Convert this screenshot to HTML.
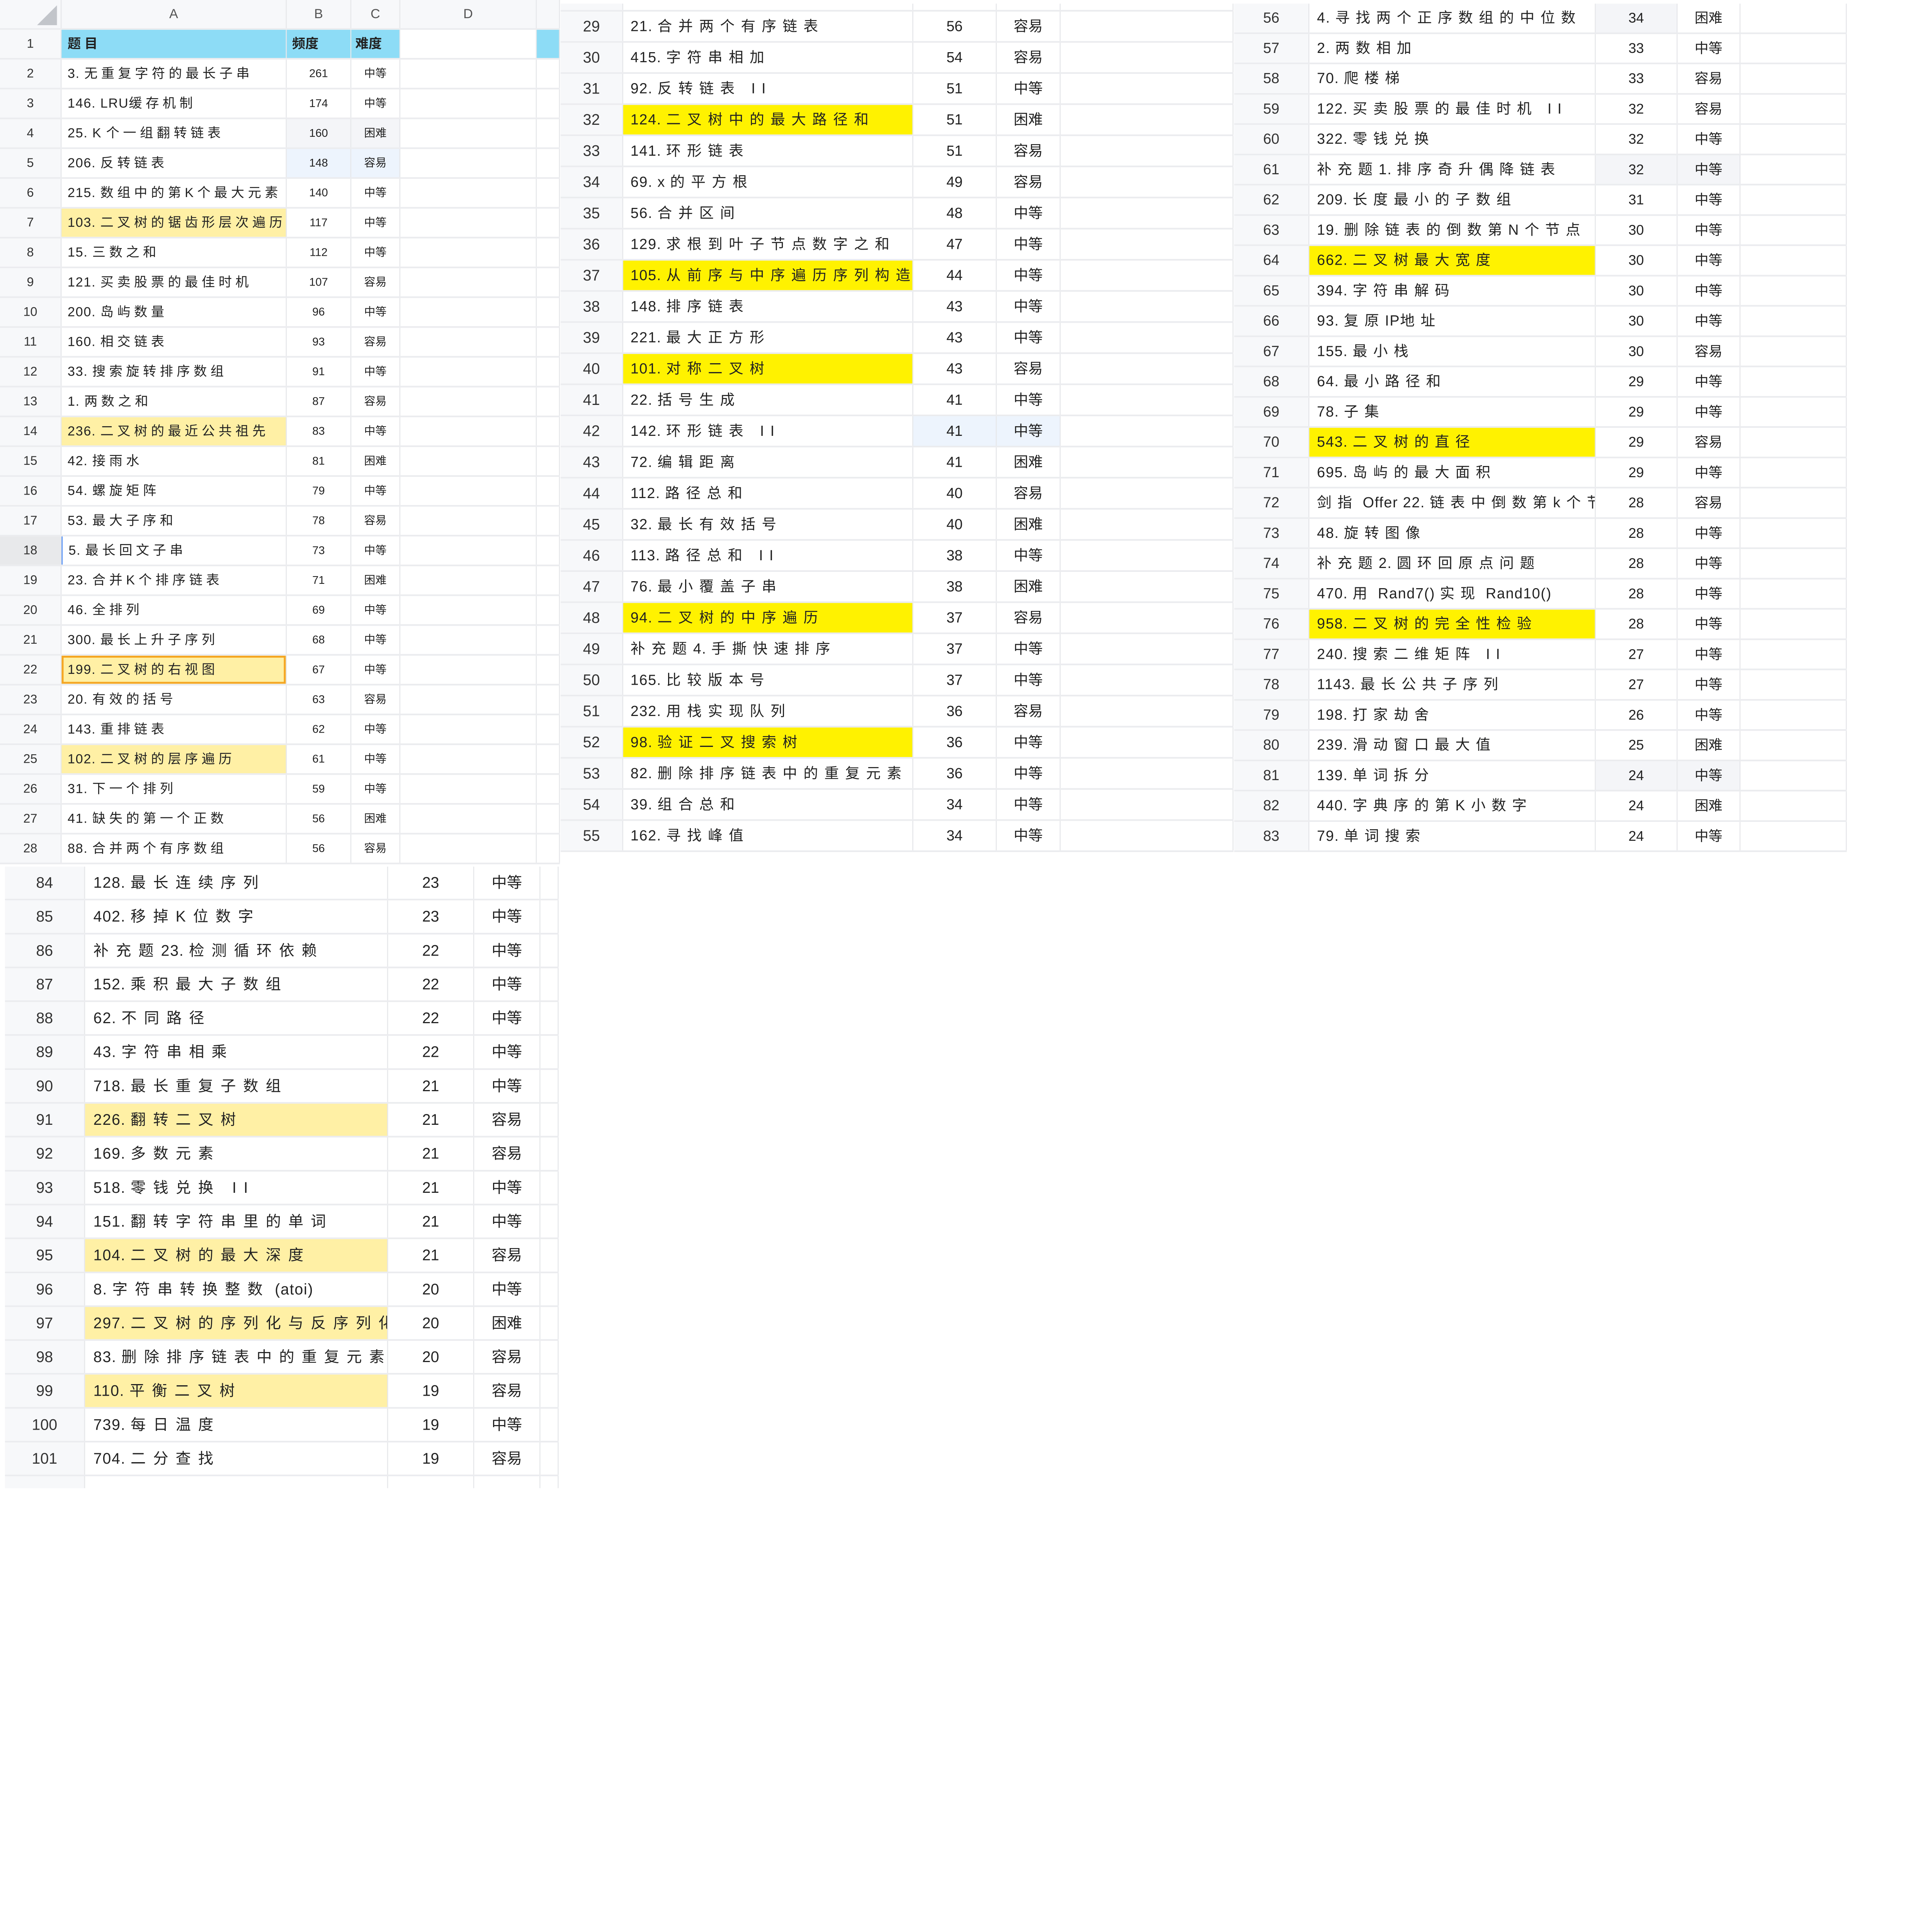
<!DOCTYPE html>
<html><head><meta charset="utf-8">
<style>
html,body{margin:0;padding:0;background:#fff;overflow:hidden;}
body{width:4850px;height:5004px;position:relative;font-family:"Liberation Sans","Noto Sans CJK SC",sans-serif;color:#222;}
#wrap{position:absolute;left:0;top:0;width:5660px;height:5840px;transform:scale(0.857);transform-origin:0 0;overflow:hidden;}
.t{position:absolute;}
.r{display:flex;box-sizing:border-box;border-bottom:5px solid #ebecef;}
.r>span{display:block;flex:none;box-sizing:border-box;overflow:hidden;white-space:nowrap;border-right:3px solid #e6e7ea;height:100%;}
.n{background:#f7f8fa;text-align:center;color:#333;}
.b,.c{text-align:center;}
.a i{font-style:normal;letter-spacing:2px;}
.y{background:#fff200;}
.p{background:#fff0a5;}
.lg{background:#f4f5f8;}
.lb{background:#edf4fd;}
.sel{box-shadow:inset 0 0 0 6px #f5a623;}
#t1 .r{height:90px;line-height:85px;font-size:40px;}
#t1 .r>span:nth-child(1){width:186px;font-size:38px;}
#t1 .r>span:nth-child(2){width:680px;padding-left:18px;letter-spacing:11px;}
#t1 .r>span:nth-child(3){width:195px;font-size:34px;}
#t1 .r>span:nth-child(4){width:148px;font-size:34px;}
#t1 .r>span:nth-child(5){width:412px;}
#t1 .r>span:nth-child(6){width:70px;}
#t1 .h>span{background:#f7f8fa;color:#555;text-align:center;padding-left:0 !important;letter-spacing:0 !important;font-size:40px !important;}
#t1 .r1>span{background:#8ddcf6;font-weight:bold;}
#t1 .r1>span.n{background:#f7f8fa;font-weight:normal;}
#t1 .r1>span.d{background:#fff;}
#t2 .r{height:94px;line-height:89px;font-size:44px;}
#t2 .r.top{height:24px;}
#t2 .r>span:nth-child(1){width:189px;font-size:46px;}
#t2 .r>span:nth-child(2){width:876px;padding-left:22px;letter-spacing:19px;}
#t2 .r>span:nth-child(3){width:252px;}
#t2 .r>span:nth-child(4){width:193px;}
#t2 .r>span:nth-child(5){width:522px;}
#t3 .r{height:91.5px;line-height:86px;font-size:42px;}
#t3 .r>span:nth-child(1){width:227px;font-size:44px;}
#t3 .r>span:nth-child(2){width:865px;padding-left:23px;letter-spacing:18px;font-size:44px;}
#t3 .r>span:nth-child(3){width:247px;}
#t3 .r>span:nth-child(4){width:190px;}
#t3 .r>span:nth-child(5){width:321px;}
#t4 .r{height:102.3px;line-height:97px;font-size:46px;}
#t4 .r.last{height:36px;border-bottom:none;}
#t4 .r>span:nth-child(1){width:242px;}
#t4 .r>span:nth-child(2){width:915px;padding-left:25px;letter-spacing:22px;}
#t4 .r>span:nth-child(3){width:260px;}
#t4 .r>span:nth-child(4){width:200px;}
#t4 .r>span:nth-child(5){width:55px;}
</style></head><body><div id="wrap">

<div class="t" id="t1" style="left:0;top:0;">
<div class="r h"><span class="n" style="position:relative"><svg width="186" height="85" style="position:absolute;left:0;top:0"><polygon points="172,16 172,76 112,76" fill="#c2c5ca"/></svg></span><span>A</span><span>B</span><span>C</span><span>D</span><span></span></div>
<div class="r r1"><span class="n">1</span><span class="a">题目</span><span class="b" style="text-align:left;padding-left:16px;font-size:40px">频度</span><span class="c" style="text-align:left;padding-left:12px;font-size:40px">难度</span><span class="d"></span><span></span></div>
<div class="r"><span class="n">2</span><span class="a"><i>3. </i>无重复字符的最长子串</span><span class="b">261</span><span class="c">中等</span><span></span><span></span></div>
<div class="r"><span class="n">3</span><span class="a"><i>146. LRU</i>缓存机制</span><span class="b">174</span><span class="c">中等</span><span></span><span></span></div>
<div class="r"><span class="n">4</span><span class="a"><i>25. K </i>个一组翻转链表</span><span class="b lg">160</span><span class="c lg">困难</span><span></span><span></span></div>
<div class="r"><span class="n">5</span><span class="a"><i>206. </i>反转链表</span><span class="b lb">148</span><span class="c lb">容易</span><span></span><span></span></div>
<div class="r"><span class="n">6</span><span class="a"><i>215. </i>数组中的第K个最大元素</span><span class="b">140</span><span class="c">中等</span><span></span><span></span></div>
<div class="r"><span class="n">7</span><span class="a p"><i>103. </i>二叉树的锯齿形层次遍历</span><span class="b">117</span><span class="c">中等</span><span></span><span></span></div>
<div class="r"><span class="n">8</span><span class="a"><i>15. </i>三数之和</span><span class="b">112</span><span class="c">中等</span><span></span><span></span></div>
<div class="r"><span class="n">9</span><span class="a"><i>121. </i>买卖股票的最佳时机</span><span class="b">107</span><span class="c">容易</span><span></span><span></span></div>
<div class="r"><span class="n">10</span><span class="a"><i>200. </i>岛屿数量</span><span class="b">96</span><span class="c">中等</span><span></span><span></span></div>
<div class="r"><span class="n">11</span><span class="a"><i>160. </i>相交链表</span><span class="b">93</span><span class="c">容易</span><span></span><span></span></div>
<div class="r"><span class="n">12</span><span class="a"><i>33. </i>搜索旋转排序数组</span><span class="b">91</span><span class="c">中等</span><span></span><span></span></div>
<div class="r"><span class="n">13</span><span class="a"><i>1. </i>两数之和</span><span class="b">87</span><span class="c">容易</span><span></span><span></span></div>
<div class="r"><span class="n">14</span><span class="a p"><i>236. </i>二叉树的最近公共祖先</span><span class="b">83</span><span class="c">中等</span><span></span><span></span></div>
<div class="r"><span class="n">15</span><span class="a"><i>42. </i>接雨水</span><span class="b">81</span><span class="c">困难</span><span></span><span></span></div>
<div class="r"><span class="n">16</span><span class="a"><i>54. </i>螺旋矩阵</span><span class="b">79</span><span class="c">中等</span><span></span><span></span></div>
<div class="r"><span class="n">17</span><span class="a"><i>53. </i>最大子序和</span><span class="b">78</span><span class="c">容易</span><span></span><span></span></div>
<div class="r"><span class="n" style="background:#e8e9eb">18</span><span class="a" style="border-left:3px solid #4a8af4"><i>5. </i>最长回文子串</span><span class="b">73</span><span class="c">中等</span><span></span><span></span></div>
<div class="r"><span class="n">19</span><span class="a"><i>23. </i>合并K个排序链表</span><span class="b">71</span><span class="c">困难</span><span></span><span></span></div>
<div class="r"><span class="n">20</span><span class="a"><i>46. </i>全排列</span><span class="b">69</span><span class="c">中等</span><span></span><span></span></div>
<div class="r"><span class="n">21</span><span class="a"><i>300. </i>最长上升子序列</span><span class="b">68</span><span class="c">中等</span><span></span><span></span></div>
<div class="r"><span class="n">22</span><span class="a p sel"><i>199. </i>二叉树的右视图</span><span class="b">67</span><span class="c">中等</span><span></span><span></span></div>
<div class="r"><span class="n">23</span><span class="a"><i>20. </i>有效的括号</span><span class="b">63</span><span class="c">容易</span><span></span><span></span></div>
<div class="r"><span class="n">24</span><span class="a"><i>143. </i>重排链表</span><span class="b">62</span><span class="c">中等</span><span></span><span></span></div>
<div class="r"><span class="n">25</span><span class="a p"><i>102. </i>二叉树的层序遍历</span><span class="b">61</span><span class="c">中等</span><span></span><span></span></div>
<div class="r"><span class="n">26</span><span class="a"><i>31. </i>下一个排列</span><span class="b">59</span><span class="c">中等</span><span></span><span></span></div>
<div class="r"><span class="n">27</span><span class="a"><i>41. </i>缺失的第一个正数</span><span class="b">56</span><span class="c">困难</span><span></span><span></span></div>
<div class="r"><span class="n">28</span><span class="a"><i>88. </i>合并两个有序数组</span><span class="b">56</span><span class="c">容易</span><span></span><span></span></div>
</div>

<div class="t" id="t2" style="left:1693px;top:11px;">
<div class="r top"><span class="n"></span><span class="a"></span><span></span><span></span><span></span></div>
<div class="r"><span class="n">29</span><span class="a"><i>21. </i>合并两个有序链表</span><span class="b">56</span><span class="c">容易</span><span></span></div>
<div class="r"><span class="n">30</span><span class="a"><i>415. </i>字符串相加</span><span class="b">54</span><span class="c">容易</span><span></span></div>
<div class="r"><span class="n">31</span><span class="a"><i>92. </i>反转链表 II</span><span class="b">51</span><span class="c">中等</span><span></span></div>
<div class="r"><span class="n">32</span><span class="a y"><i>124. </i>二叉树中的最大路径和</span><span class="b">51</span><span class="c">困难</span><span></span></div>
<div class="r"><span class="n">33</span><span class="a"><i>141. </i>环形链表</span><span class="b">51</span><span class="c">容易</span><span></span></div>
<div class="r"><span class="n">34</span><span class="a"><i>69. x </i>的平方根</span><span class="b">49</span><span class="c">容易</span><span></span></div>
<div class="r"><span class="n">35</span><span class="a"><i>56. </i>合并区间</span><span class="b">48</span><span class="c">中等</span><span></span></div>
<div class="r"><span class="n">36</span><span class="a"><i>129. </i>求根到叶子节点数字之和</span><span class="b">47</span><span class="c">中等</span><span></span></div>
<div class="r"><span class="n">37</span><span class="a y"><i>105. </i>从前序与中序遍历序列构造二叉树</span><span class="b">44</span><span class="c">中等</span><span></span></div>
<div class="r"><span class="n">38</span><span class="a"><i>148. </i>排序链表</span><span class="b">43</span><span class="c">中等</span><span></span></div>
<div class="r"><span class="n">39</span><span class="a"><i>221. </i>最大正方形</span><span class="b">43</span><span class="c">中等</span><span></span></div>
<div class="r"><span class="n">40</span><span class="a y"><i>101. </i>对称二叉树</span><span class="b">43</span><span class="c">容易</span><span></span></div>
<div class="r"><span class="n">41</span><span class="a"><i>22. </i>括号生成</span><span class="b">41</span><span class="c">中等</span><span></span></div>
<div class="r"><span class="n">42</span><span class="a"><i>142. </i>环形链表 II</span><span class="b lb">41</span><span class="c lb">中等</span><span></span></div>
<div class="r"><span class="n">43</span><span class="a"><i>72. </i>编辑距离</span><span class="b">41</span><span class="c">困难</span><span></span></div>
<div class="r"><span class="n">44</span><span class="a"><i>112. </i>路径总和</span><span class="b">40</span><span class="c">容易</span><span></span></div>
<div class="r"><span class="n">45</span><span class="a"><i>32. </i>最长有效括号</span><span class="b">40</span><span class="c">困难</span><span></span></div>
<div class="r"><span class="n">46</span><span class="a"><i>113. </i>路径总和 II</span><span class="b">38</span><span class="c">中等</span><span></span></div>
<div class="r"><span class="n">47</span><span class="a"><i>76. </i>最小覆盖子串</span><span class="b">38</span><span class="c">困难</span><span></span></div>
<div class="r"><span class="n">48</span><span class="a y"><i>94. </i>二叉树的中序遍历</span><span class="b">37</span><span class="c">容易</span><span></span></div>
<div class="r"><span class="n">49</span><span class="a">补充题<i>4. </i>手撕快速排序</span><span class="b">37</span><span class="c">中等</span><span></span></div>
<div class="r"><span class="n">50</span><span class="a"><i>165. </i>比较版本号</span><span class="b">37</span><span class="c">中等</span><span></span></div>
<div class="r"><span class="n">51</span><span class="a"><i>232. </i>用栈实现队列</span><span class="b">36</span><span class="c">容易</span><span></span></div>
<div class="r"><span class="n">52</span><span class="a y"><i>98. </i>验证二叉搜索树</span><span class="b">36</span><span class="c">中等</span><span></span></div>
<div class="r"><span class="n">53</span><span class="a"><i>82. </i>删除排序链表中的重复元素 II</span><span class="b">36</span><span class="c">中等</span><span></span></div>
<div class="r"><span class="n">54</span><span class="a"><i>39. </i>组合总和</span><span class="b">34</span><span class="c">中等</span><span></span></div>
<div class="r"><span class="n">55</span><span class="a"><i>162. </i>寻找峰值</span><span class="b">34</span><span class="c">中等</span><span></span></div>
</div>

<div class="t" id="t3" style="left:3727px;top:11px;">
<div class="r"><span class="n">56</span><span class="a"><i>4. </i>寻找两个正序数组的中位数</span><span class="b lg">34</span><span class="c">困难</span><span></span></div>
<div class="r"><span class="n">57</span><span class="a"><i>2. </i>两数相加</span><span class="b">33</span><span class="c">中等</span><span></span></div>
<div class="r"><span class="n">58</span><span class="a"><i>70. </i>爬楼梯</span><span class="b">33</span><span class="c">容易</span><span></span></div>
<div class="r"><span class="n">59</span><span class="a"><i>122. </i>买卖股票的最佳时机 II</span><span class="b">32</span><span class="c">容易</span><span></span></div>
<div class="r"><span class="n">60</span><span class="a"><i>322. </i>零钱兑换</span><span class="b">32</span><span class="c">中等</span><span></span></div>
<div class="r"><span class="n">61</span><span class="a">补充题<i>1. </i>排序奇升偶降链表</span><span class="b lg">32</span><span class="c lg">中等</span><span></span></div>
<div class="r"><span class="n">62</span><span class="a"><i>209. </i>长度最小的子数组</span><span class="b">31</span><span class="c">中等</span><span></span></div>
<div class="r"><span class="n">63</span><span class="a"><i>19. </i>删除链表的倒数第N个节点</span><span class="b">30</span><span class="c">中等</span><span></span></div>
<div class="r"><span class="n">64</span><span class="a y"><i>662. </i>二叉树最大宽度</span><span class="b">30</span><span class="c">中等</span><span></span></div>
<div class="r"><span class="n">65</span><span class="a"><i>394. </i>字符串解码</span><span class="b">30</span><span class="c">中等</span><span></span></div>
<div class="r"><span class="n">66</span><span class="a"><i>93. </i>复原<i>IP</i>地址</span><span class="b">30</span><span class="c">中等</span><span></span></div>
<div class="r"><span class="n">67</span><span class="a"><i>155. </i>最小栈</span><span class="b">30</span><span class="c">容易</span><span></span></div>
<div class="r"><span class="n">68</span><span class="a"><i>64. </i>最小路径和</span><span class="b">29</span><span class="c">中等</span><span></span></div>
<div class="r"><span class="n">69</span><span class="a"><i>78. </i>子集</span><span class="b">29</span><span class="c">中等</span><span></span></div>
<div class="r"><span class="n">70</span><span class="a y"><i>543. </i>二叉树的直径</span><span class="b">29</span><span class="c">容易</span><span></span></div>
<div class="r"><span class="n">71</span><span class="a"><i>695. </i>岛屿的最大面积</span><span class="b">29</span><span class="c">中等</span><span></span></div>
<div class="r"><span class="n">72</span><span class="a">剑指<i> Offer 22. </i>链表中倒数第k个节点</span><span class="b">28</span><span class="c">容易</span><span></span></div>
<div class="r"><span class="n">73</span><span class="a"><i>48. </i>旋转图像</span><span class="b">28</span><span class="c">中等</span><span></span></div>
<div class="r"><span class="n">74</span><span class="a">补充题<i>2. </i>圆环回原点问题</span><span class="b">28</span><span class="c">中等</span><span></span></div>
<div class="r"><span class="n">75</span><span class="a"><i>470. </i>用<i> Rand7() </i>实现<i> Rand10()</i></span><span class="b">28</span><span class="c">中等</span><span></span></div>
<div class="r"><span class="n">76</span><span class="a y"><i>958. </i>二叉树的完全性检验</span><span class="b">28</span><span class="c">中等</span><span></span></div>
<div class="r"><span class="n">77</span><span class="a"><i>240. </i>搜索二维矩阵 II</span><span class="b">27</span><span class="c">中等</span><span></span></div>
<div class="r"><span class="n">78</span><span class="a"><i>1143. </i>最长公共子序列</span><span class="b">27</span><span class="c">中等</span><span></span></div>
<div class="r"><span class="n">79</span><span class="a"><i>198. </i>打家劫舍</span><span class="b">26</span><span class="c">中等</span><span></span></div>
<div class="r"><span class="n">80</span><span class="a"><i>239. </i>滑动窗口最大值</span><span class="b">25</span><span class="c">困难</span><span></span></div>
<div class="r"><span class="n">81</span><span class="a"><i>139. </i>单词拆分</span><span class="b lg">24</span><span class="c lg">中等</span><span></span></div>
<div class="r"><span class="n">82</span><span class="a"><i>440. </i>字典序的第K小数字</span><span class="b">24</span><span class="c">困难</span><span></span></div>
<div class="r"><span class="n">83</span><span class="a"><i>79. </i>单词搜索</span><span class="b">24</span><span class="c">中等</span><span></span></div>
</div>

<div class="t" id="t4" style="left:15px;top:2617px;">
<div class="r"><span class="n">84</span><span class="a"><i>128. </i>最长连续序列</span><span class="b">23</span><span class="c">中等</span><span></span></div>
<div class="r"><span class="n">85</span><span class="a"><i>402. </i>移掉K位数字</span><span class="b">23</span><span class="c">中等</span><span></span></div>
<div class="r"><span class="n">86</span><span class="a">补充题<i>23. </i>检测循环依赖</span><span class="b">22</span><span class="c">中等</span><span></span></div>
<div class="r"><span class="n">87</span><span class="a"><i>152. </i>乘积最大子数组</span><span class="b">22</span><span class="c">中等</span><span></span></div>
<div class="r"><span class="n">88</span><span class="a"><i>62. </i>不同路径</span><span class="b">22</span><span class="c">中等</span><span></span></div>
<div class="r"><span class="n">89</span><span class="a"><i>43. </i>字符串相乘</span><span class="b">22</span><span class="c">中等</span><span></span></div>
<div class="r"><span class="n">90</span><span class="a"><i>718. </i>最长重复子数组</span><span class="b">21</span><span class="c">中等</span><span></span></div>
<div class="r"><span class="n">91</span><span class="a p"><i>226. </i>翻转二叉树</span><span class="b">21</span><span class="c">容易</span><span></span></div>
<div class="r"><span class="n">92</span><span class="a"><i>169. </i>多数元素</span><span class="b">21</span><span class="c">容易</span><span></span></div>
<div class="r"><span class="n">93</span><span class="a"><i>518. </i>零钱兑换 II</span><span class="b">21</span><span class="c">中等</span><span></span></div>
<div class="r"><span class="n">94</span><span class="a"><i>151. </i>翻转字符串里的单词</span><span class="b">21</span><span class="c">中等</span><span></span></div>
<div class="r"><span class="n">95</span><span class="a p"><i>104. </i>二叉树的最大深度</span><span class="b">21</span><span class="c">容易</span><span></span></div>
<div class="r"><span class="n">96</span><span class="a"><i>8. </i>字符串转换整数<i> (atoi)</i></span><span class="b">20</span><span class="c">中等</span><span></span></div>
<div class="r"><span class="n">97</span><span class="a p"><i>297. </i>二叉树的序列化与反序列化</span><span class="b">20</span><span class="c">困难</span><span></span></div>
<div class="r"><span class="n">98</span><span class="a"><i>83. </i>删除排序链表中的重复元素</span><span class="b">20</span><span class="c">容易</span><span></span></div>
<div class="r"><span class="n">99</span><span class="a p"><i>110. </i>平衡二叉树</span><span class="b">19</span><span class="c">容易</span><span></span></div>
<div class="r"><span class="n">100</span><span class="a"><i>739. </i>每日温度</span><span class="b">19</span><span class="c">中等</span><span></span></div>
<div class="r"><span class="n">101</span><span class="a"><i>704. </i>二分查找</span><span class="b">19</span><span class="c">容易</span><span></span></div>
<div class="r last"><span class="n"></span><span class="a"></span><span></span><span></span><span></span></div>
</div>

</div></body></html>
